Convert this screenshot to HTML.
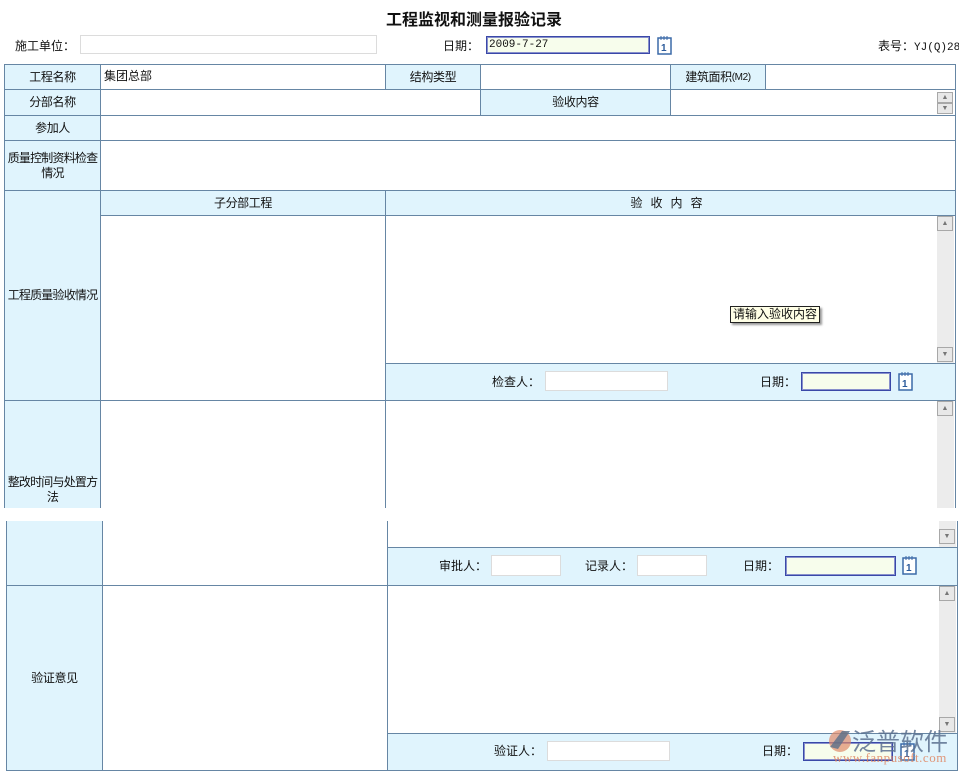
<!DOCTYPE html>
<html><head><meta charset="utf-8"><style>
body{margin:0;width:959px;height:772px;background:#fff;position:relative;overflow:hidden;font-family:"Liberation Sans","Noto Sans CJK SC","WenQuanYi Zen Hei",sans-serif;font-size:12px;color:#111}
div{box-sizing:border-box}
.a{position:absolute}
.c{position:absolute;border:1px solid #6686a4;background:#fff}
.l{position:absolute;border:1px solid #6686a4;background:#e0f4fd;display:flex;align-items:center;justify-content:center;text-align:center;line-height:15px;white-space:nowrap;letter-spacing:-0.4px;padding:0}
.in{position:absolute;background:#fff;border:1px solid #dcdcdc}
.dt{position:absolute;background:#f7fdec;border:1px solid #3a48a8;box-shadow:inset 0 0 0 1px #8890cc}
.sb{position:absolute;width:17px;background:#ececec}
.bt{position:absolute;left:0;width:16px;height:15px;background:#e8e8e8;border:1px solid #a8a8a8;font-size:7px;color:#777;text-align:center;line-height:13px}
.t{position:absolute;white-space:nowrap}
</style></head><body>
<div class="t" style="left:386px;top:6px;font-size:16px;font-weight:bold">工程监视和测量报验记录</div>
<div class="t" style="left:15px;top:37px">施工单位：</div>
<div class="in" style="left:80px;top:35px;width:297px;height:19px"></div>
<div class="t" style="left:443px;top:37px">日期：</div>
<div class="dt" style="left:486px;top:36px;width:164px;height:18px;font-family:'Liberation Mono',monospace;font-size:11px;padding:2px 2px;line-height:13px">2009-7-27</div>
<svg class="a" style="left:656px;top:35px" width="17" height="20"><rect x="2" y="3" width="13" height="16" fill="#fff" stroke="#3b6aa8" stroke-width="1.5"/><path d="M5 1v4M8 1v4M11 1v4" stroke="#3b6aa8"/><text x="5" y="16" font-size="10" font-weight="bold" fill="#2b5a9a" font-family="Liberation Sans">1</text></svg>
<div class="t" style="left:878px;top:37px">表号：<span style="font-family:'Liberation Mono',monospace;font-size:11px">YJ(Q)282</span></div>

<div class="l" style="left:4px;top:64px;width:97px;height:26px">工程名称</div>
<div class="c" style="left:100px;top:64px;width:286px;height:26px;padding:2px 3px">集团总部</div>
<div class="l" style="left:385px;top:64px;width:96px;height:26px">结构类型</div>
<div class="c" style="left:480px;top:64px;width:191px;height:26px"></div>
<div class="l" style="left:670px;top:64px;width:96px;height:26px">建筑面积<span style="font-size:10px">(M2)</span></div>
<div class="c" style="left:765px;top:64px;width:191px;height:26px"></div>
<div class="l" style="left:4px;top:89px;width:97px;height:27px">分部名称</div>
<div class="c" style="left:100px;top:89px;width:381px;height:27px"></div>
<div class="l" style="left:480px;top:89px;width:191px;height:27px">验收内容</div>
<div class="c" style="left:670px;top:89px;width:286px;height:27px"></div>
<div class="bt" style="left:937px;top:92px;height:11px;line-height:9px">▲</div>
<div class="bt" style="left:937px;top:103px;height:11px;line-height:9px">▼</div>
<div class="l" style="left:4px;top:115px;width:97px;height:26px">参加人</div>
<div class="c" style="left:100px;top:115px;width:856px;height:26px"></div>
<div class="l" style="left:4px;top:140px;width:97px;height:51px;letter-spacing:-0.8px">质量控制资料检查<br>情况</div>
<div class="c" style="left:100px;top:140px;width:856px;height:51px"></div>
<div class="l" style="left:4px;top:190px;width:97px;height:211px;letter-spacing:-0.8px">工程质量验收情况</div>
<div class="l" style="left:100px;top:190px;width:286px;height:26px">子分部工程</div>
<div class="l" style="left:385px;top:190px;width:571px;height:26px;letter-spacing:8px">验收内容</div>
<div class="c" style="left:100px;top:215px;width:286px;height:186px"></div>
<div class="c" style="left:385px;top:215px;width:571px;height:149px"></div>
<div class="sb" style="left:937px;top:216px;height:147px"><div class="bt" style="top:0">▲</div><div class="bt" style="top:131px">▼</div></div>
<div class="a" style="left:730px;top:306px;border:1px solid #222;background:#ffffe6;padding:0 2px;box-shadow:2px 2px 2px #999;line-height:15px">请输入验收内容</div>
<div class="l" style="left:385px;top:363px;width:571px;height:38px"></div>
<div class="t" style="left:492px;top:373px">检查人：</div>
<div class="in" style="left:545px;top:371px;width:123px;height:20px"></div>
<div class="t" style="left:760px;top:373px">日期：</div>
<div class="dt" style="left:801px;top:372px;width:90px;height:19px"></div>
<svg class="a" style="left:897px;top:371px" width="17" height="20"><rect x="2" y="3" width="13" height="16" fill="#fff" stroke="#3b6aa8" stroke-width="1.5"/><path d="M5 1v4M8 1v4M11 1v4" stroke="#3b6aa8"/><text x="5" y="16" font-size="10" font-weight="bold" fill="#2b5a9a">1</text></svg>
<div class="l" style="left:4px;top:400px;width:97px;height:120px;align-items:flex-end;padding-bottom:14px;letter-spacing:-0.8px">整改时间与处置方<br>法</div>
<div class="c" style="left:100px;top:400px;width:286px;height:120px"></div>
<div class="c" style="left:385px;top:400px;width:571px;height:120px"></div>
<div class="sb" style="left:937px;top:401px;height:120px"><div class="bt" style="top:0">▲</div></div>
<div class="a" style="left:0;top:508px;width:959px;height:13px;background:#fff"></div>
<div class="l" style="left:6px;top:521px;width:97px;height:65px;border-top:none"></div>
<div class="c" style="left:102px;top:521px;width:286px;height:65px;border-top:none"></div>
<div class="c" style="left:387px;top:521px;width:571px;height:27px;border-top:none"></div>
<div class="sb" style="left:939px;top:521px;height:26px"><div class="bt" style="top:8px">▼</div></div>
<div class="l" style="left:387px;top:547px;width:571px;height:39px"></div>
<div class="t" style="left:439px;top:557px">审批人：</div>
<div class="in" style="left:491px;top:555px;width:70px;height:21px"></div>
<div class="t" style="left:585px;top:557px">记录人：</div>
<div class="in" style="left:637px;top:555px;width:70px;height:21px"></div>
<div class="t" style="left:743px;top:557px">日期：</div>
<div class="dt" style="left:785px;top:556px;width:111px;height:20px"></div>
<svg class="a" style="left:901px;top:555px" width="17" height="21"><rect x="2" y="3" width="13" height="16" fill="#fff" stroke="#3b6aa8" stroke-width="1.5"/><path d="M5 1v4M8 1v4M11 1v4" stroke="#3b6aa8"/><text x="5" y="16" font-size="10" font-weight="bold" fill="#2b5a9a">1</text></svg>
<div class="l" style="left:6px;top:585px;width:97px;height:186px">验证意见</div>
<div class="c" style="left:102px;top:585px;width:286px;height:186px"></div>
<div class="c" style="left:387px;top:585px;width:571px;height:149px"></div>
<div class="sb" style="left:939px;top:586px;height:147px"><div class="bt" style="top:0">▲</div><div class="bt" style="top:131px">▼</div></div>
<div class="l" style="left:387px;top:733px;width:571px;height:38px"></div>
<div class="t" style="left:494px;top:742px">验证人：</div>
<div class="in" style="left:547px;top:741px;width:123px;height:20px"></div>
<div class="t" style="left:762px;top:742px">日期：</div>
<div class="dt" style="left:803px;top:742px;width:90px;height:19px"></div>
<svg class="a" style="left:899px;top:741px" width="17" height="20"><rect x="2" y="3" width="13" height="16" fill="#fff" stroke="#3b6aa8" stroke-width="1.5"/><path d="M5 1v4M8 1v4M11 1v4" stroke="#3b6aa8"/><text x="5" y="16" font-size="10" font-weight="bold" fill="#2b5a9a">1</text></svg>
<svg class="a" style="left:826px;top:727px" width="28" height="28"><circle cx="14" cy="14" r="11" fill="#e08a6a" opacity=".7"/><path d="M4 20L16 4h8L12 22z" fill="#5a6f8a" opacity=".8"/></svg>
<div class="t" style="left:852px;top:722px;font-size:24px;color:#5c7190;opacity:.85">泛普软件</div>
<div class="t" style="left:833px;top:750px;font-size:13px;letter-spacing:0.5px;color:#e0805a;opacity:.8;font-family:'Liberation Serif',serif">www.fanpusoft.com</div>
</body></html>
